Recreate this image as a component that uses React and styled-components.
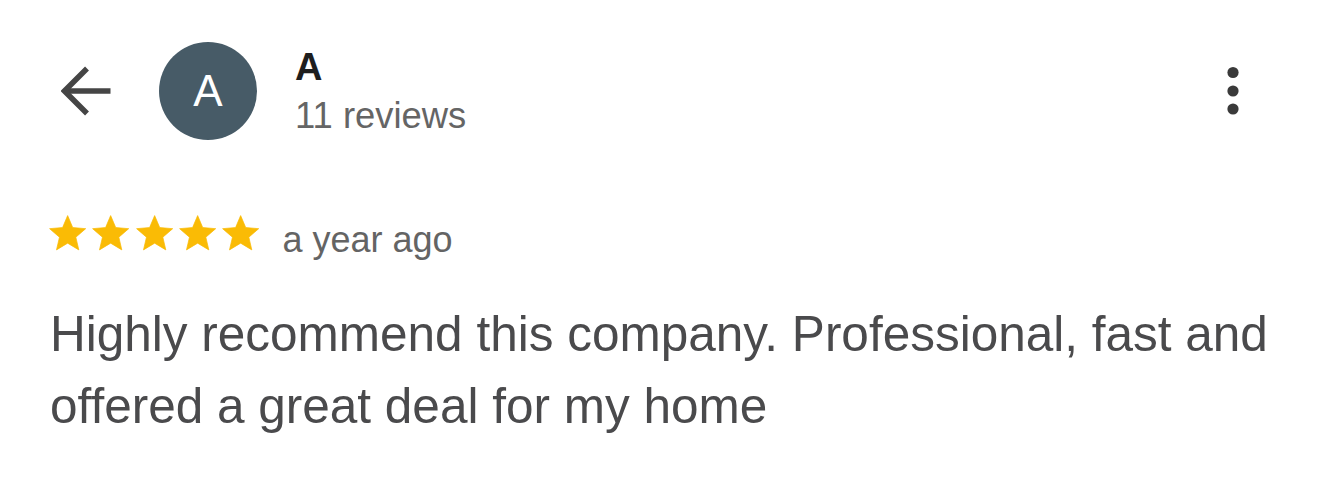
import React from 'react';
import styled, {createGlobalStyle} from 'styled-components';

const GlobalStyle = createGlobalStyle`
    html, body {
        margin: 0;
        padding: 0;
        background: #ffffff;
    }
    body {
        font-family: "Liberation Sans", Arial, sans-serif;
        -webkit-font-smoothing: antialiased;
    }
`;

const Page = styled.div`
    width: 1320px;
    height: 485px;
    box-sizing: border-box;
    padding: 42px 20px 0 50px;
    background: #ffffff;
    overflow: hidden;
`;

const Header = styled.div`
    display: flex;
    flex-direction: row;
    align-items: center;
    height: 98px;
`;

const BackButton = styled.button`
    display: flex;
    align-items: center;
    justify-content: center;
    width: 50px;
    height: 50px;
    margin: 0 48px 0 11px;
    padding: 0;
    border: none;
    background: transparent;
    color: #454545;
`;

const Avatar = styled.div`
    display: flex;
    align-items: center;
    justify-content: center;
    flex: none;
    width: ${props => props.size}px;
    height: ${props => props.size}px;
    border-radius: 50%;
    background: #475b67;
    color: #ffffff;
    font-size: 44px;
    line-height: 1;
`;

const Author = styled.div`
    display: flex;
    flex-direction: column;
    margin-left: 38px;
`;

const AuthorName = styled.div`
    font-size: 38px;
    line-height: 42px;
    font-weight: 700;
    color: #1e1e1e;
`;

const ReviewCount = styled.div`
    margin-top: 8px;
    font-size: 36.4px;
    line-height: 40px;
    color: #656565;
`;

const MenuButton = styled.button`
    display: flex;
    align-items: center;
    justify-content: center;
    width: 40px;
    height: 60px;
    margin: 0 47px 0 auto;
    padding: 0;
    border: none;
    background: transparent;
    color: #3a3a3a;
`;

const RatingRow = styled.div`
    display: flex;
    flex-direction: row;
    align-items: flex-start;
    margin: 72px 0 0 -4px;
`;

const Stars = styled.div`
    display: flex;
    flex-direction: row;
    color: #fabb05;
`;

const When = styled.span`
    margin: 8px 0 0 20px;
    font-size: 36px;
    line-height: 40px;
    color: #646464;
`;

const Body = styled.p`
    margin: 38px 0 0 0;
    font-size: 49.5px;
    line-height: 72px;
    color: #4a4a4c;
`;

const ArrowIcon = () => (
    <svg width="50" height="50" viewBox="0 0 50 50" fill="none" stroke="currentColor" strokeWidth="5.5">
        <path d="M49.5 25H4" />
        <path d="M26 2.5L3.5 25L26 47.5" strokeLinejoin="miter" />
    </svg>
);

const DotsIcon = () => (
    <svg width="12" height="50" viewBox="0 0 12 50" fill="currentColor">
        <circle cx="6" cy="6.5" r="5.6" />
        <circle cx="6" cy="25" r="5.6" />
        <circle cx="6" cy="43" r="5.6" />
    </svg>
);

const Star = () => (
    <svg width="43.3" height="43.3" viewBox="0 0 24 24" fill="currentColor" stroke="currentColor" strokeWidth="0.4" strokeLinejoin="round">
        <path d="M12 17.27L18.18 21l-1.64-7.03L22 9.24l-7.19-.61L12 2 9.19 8.63 2 9.24l5.46 4.73L5.82 21z" />
    </svg>
);

const review = {
    author: 'A',
    reviews: 11,
    rating: 5,
    when: 'a year ago',
    text: 'Highly recommend this company. Professional, fast and offered a great deal for my home',
};

const App = () => {
    return (
        <>
            <GlobalStyle />
            <Page>
                <Header>
                    <BackButton aria-label="Back"><ArrowIcon /></BackButton>
                    <Avatar size={98}>{review.author}</Avatar>
                    <Author>
                        <AuthorName>{review.author}</AuthorName>
                        <ReviewCount>{review.reviews} reviews</ReviewCount>
                    </Author>
                    <MenuButton aria-label="More"><DotsIcon /></MenuButton>
                </Header>
                <RatingRow>
                    <Stars>
                        {Array.from({length: review.rating}).map((_, i) => <Star key={i} />)}
                    </Stars>
                    <When>{review.when}</When>
                </RatingRow>
                <Body>{review.text}</Body>
            </Page>
        </>
    );
};

export default App;
